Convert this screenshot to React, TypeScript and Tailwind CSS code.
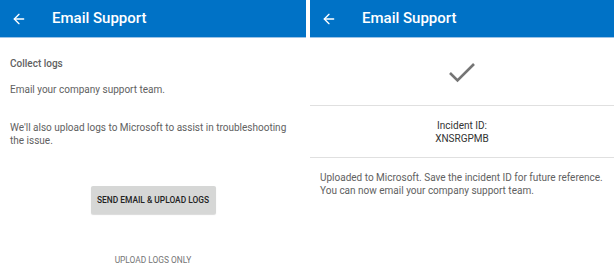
import { ArrowLeft } from "lucide-react";

function Header() {
  return (
    <div className="flex h-[38px] items-center border-b border-[#9cc3e6] bg-[#0072c6] text-white">
      <ArrowLeft className="ml-[11px] h-[16px] w-[16px]" strokeWidth={2} />
      <span className="ml-[25px] text-[15px] font-medium">Email Support</span>
    </div>
  );
}

function CollectLogs() {
  return (
    <div className="flex w-[306px] flex-col">
      <Header />
      <div className="flex flex-col px-[10px] text-[10px] leading-[13px] text-[#616161]">
        <div className="mt-[19px] font-medium">Collect logs</div>
        <div className="mt-[13px]">Email your company support team.</div>
        <div className="mt-[25px]">
          We'll also upload logs to Microsoft to assist in troubleshooting the
          issue.
        </div>
        <div className="mt-[39px] flex justify-center">
          <button className="h-[28px] w-[125px] rounded-[2px] bg-[#d6d7d6] text-[8.4px] font-medium text-[#222] shadow-[0_1px_1px_rgba(0,0,0,0.15)]">
            SEND EMAIL &amp; UPLOAD LOGS
          </button>
        </div>
        <div className="mt-[40px] text-center text-[8.4px] text-[#757575]">
          UPLOAD LOGS ONLY
        </div>
      </div>
    </div>
  );
}

function Uploaded() {
  return (
    <div className="ml-[4px] flex w-[304px] flex-col">
      <Header />
      <div className="flex h-[67px] items-center justify-center pt-[1px]">
        <svg width="30" height="22" viewBox="0 0 30 22" fill="none">
          <path
            d="M3 12 L10.5 19.5 L27 3"
            stroke="#757575"
            strokeWidth="2.6"
          />
        </svg>
      </div>
      <div className="border-t border-[#e0e0e0]" />
      <div className="flex h-[51px] flex-col items-center justify-center text-[10px] leading-[13px] text-[#333]">
        <div>Incident ID:</div>
        <div>XNSRGPMB</div>
      </div>
      <div className="border-t border-[#e0e0e0]" />
      <div className="mt-[13px] px-[10px] text-[10px] leading-[13px] text-[#616161]">
        Uploaded to Microsoft. Save the incident ID for future reference. You
        can now email your company support team.
      </div>
    </div>
  );
}

export default function App() {
  return (
    <div className="flex h-[271px] w-[616px] overflow-hidden bg-white font-['Roboto',sans-serif]">
      <CollectLogs />
      <Uploaded />
    </div>
  );
}
